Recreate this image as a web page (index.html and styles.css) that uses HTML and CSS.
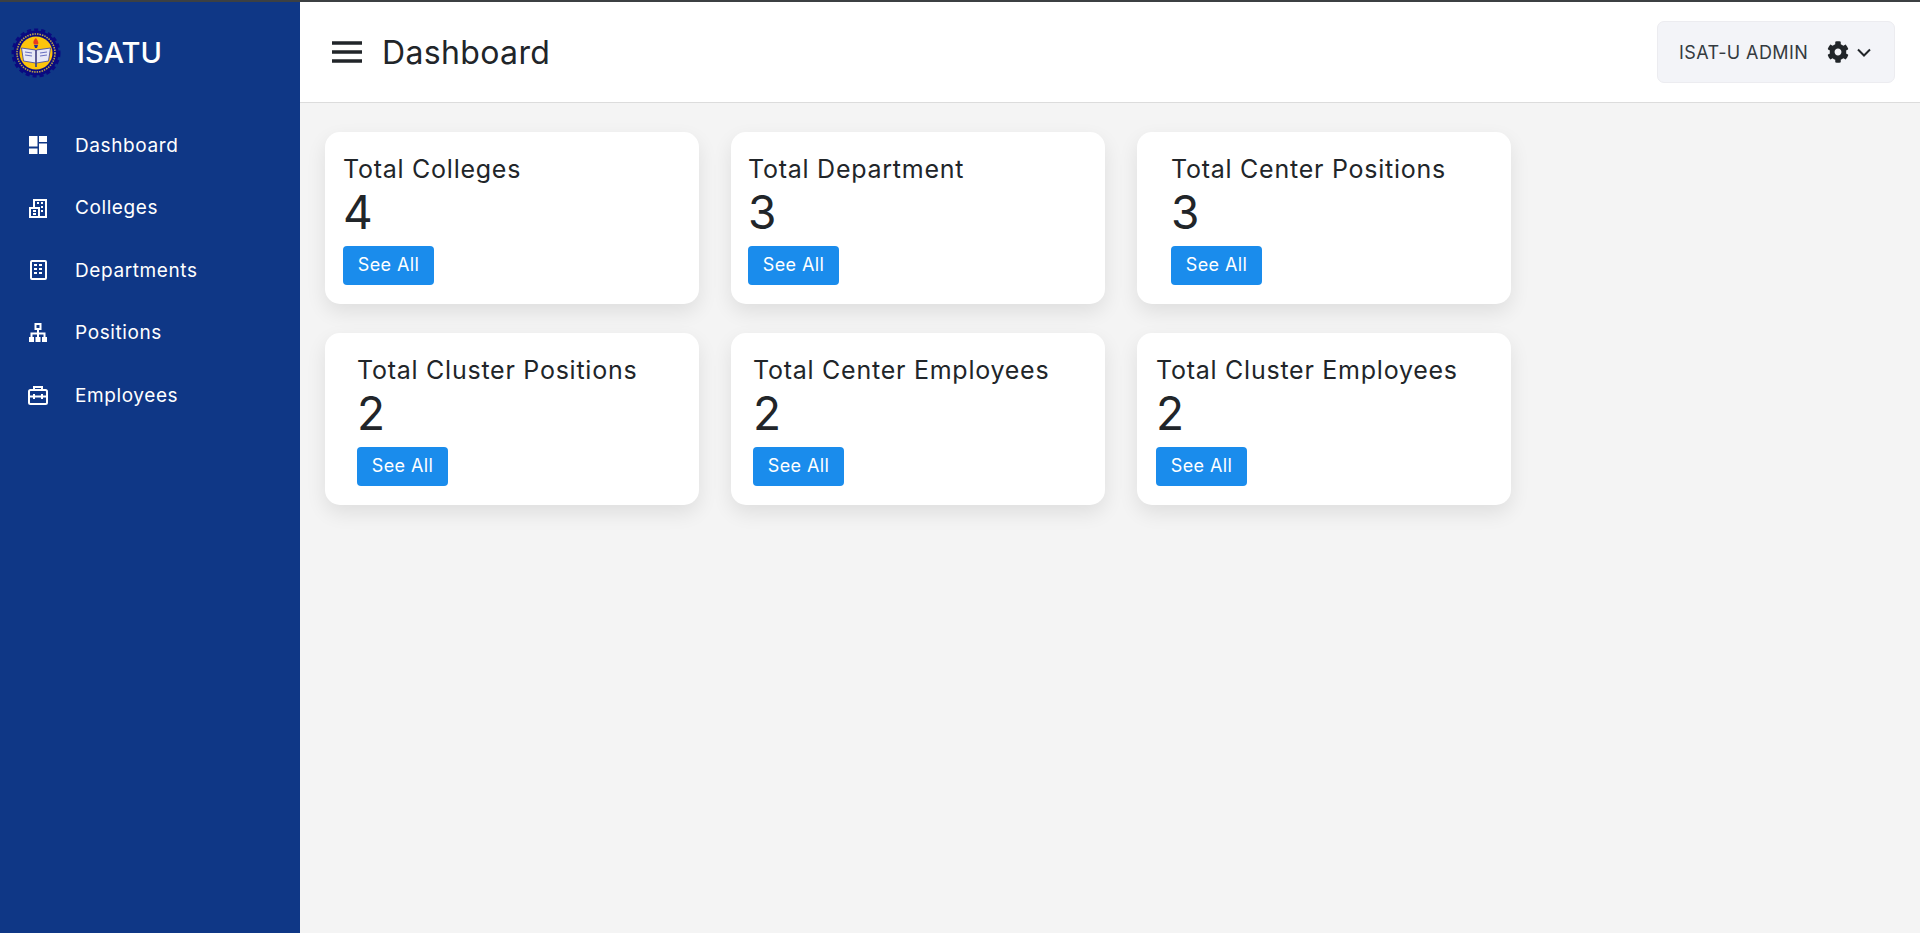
FILE: index.html
```html
<!DOCTYPE html>
<html>
<head>
<meta charset="utf-8" />
<title>ISATU - Dashboard</title>
<link rel="stylesheet" href="styles.css">
</head>
<body>
<div class="top-line"></div>
<div class="app">
	<aside class="sidebar">
		<div class="brand">
			<svg class="seal" viewBox="0 0 50 50">
				<circle cx="25" cy="25" r="22.5" fill="#0a0a80" stroke="#0a0a80" stroke-width="4" stroke-dasharray="4 2.9"/>
				<circle cx="25" cy="25" r="22" fill="#0a0a80"/>
				<circle cx="25" cy="25" r="19" fill="none" stroke="#b9a24a" stroke-width="1.6" stroke-dasharray="1.5 1"/>
				<circle cx="25" cy="25" r="16.5" fill="#fdc40c"/>
				<path d="M23 17 L27 17 L26 20 L24 20 Z" fill="#20309a"/>
				<path d="M25 10 C22 12 22 15 23 16.5 L27 16.5 C28 14.5 27 13 25 10 Z" fill="#e8391c"/>
				<path d="M10.500 20 L24.500 22 L24.500 35 L12.500 33 Z" fill="#e8e8f6" stroke="#3a3f9e" stroke-width=".8"/>
				<path d="M39.500 20 L25.500 22 L25.500 35 L37.500 33 Z" fill="#e8e8f6" stroke="#3a3f9e" stroke-width=".8"/>
				<path d="M14 24 L21 25 M14 27 L21 28 M29 25 L36 24 M29 28 L36 27" stroke="#6a70c0" stroke-width="1.200"/>
				<path d="M25 35 L25 39" stroke="#20309a" stroke-width="1.500"/>
			</svg>
			<span class="brand-name">ISATU</span>
		</div>
		<nav class="menu">
			<a class="menu-item">
				<svg class="menu-icon" viewBox="0 0 24 24" fill="#fff"><path d="M3 3h8.500v10.500H3zM13 3h8v6h-8zM3 15.500h8.500V21H3zM13 10.500h8V21h-8z"/></svg>
				<span>Dashboard</span>
			</a>
			<a class="menu-item">
				<svg class="menu-icon" viewBox="0 0 24 24" fill="none" stroke="#fff" stroke-width="2"><path d="M8 11V4h12v17H4V12h9v9"/><path d="M11 7h2M15 7h2M15 11h2M15 15h2M7 15h3M7 18h3"/></svg>
				<span>Colleges</span>
			</a>
			<a class="menu-item">
				<svg class="menu-icon" viewBox="0 0 24 24" fill="none" stroke="#fff" stroke-width="2"><rect x="5" y="3" width="15" height="18" rx="1"/><path d="M8 7h3M13 7h3M8 11h3M13 11h3M8 15h3M13 15h3"/></svg>
				<span>Departments</span>
			</a>
			<a class="menu-item">
				<svg class="menu-icon" viewBox="0 0 24 24" fill="none" stroke="#fff" stroke-width="2"><rect x="9.500" y="3" width="5" height="5"/><path d="M12 8v8M5.500 16v-3.500h13V16"/><path d="M3 16h5v5H3zM9.500 16h5v5h-5zM16 16h5v5h-5z" fill="#fff" stroke="none"/></svg>
				<span>Positions</span>
			</a>
			<a class="menu-item">
				<svg class="menu-icon" viewBox="0 0 24 24" fill="none" stroke="#fff" stroke-width="2"><path d="M8 7V4h8v3"/><rect x="3" y="7" width="18" height="14" rx="1.500"/><path d="M3 13.500h18M8 11v5M16 11v5"/></svg>
				<span>Employees</span>
			</a>
		</nav>
	</aside>
	<div class="main">
		<header class="topbar">
			<div class="topbar-left">
				<svg class="burger" viewBox="0 0 30 24" fill="none" stroke="#212529" stroke-width="3.500"><path d="M0 3h30M0 12h30M0 21h30"/></svg>
				<h1 class="page-title">Dashboard</h1>
			</div>
			<div class="user-box">
				<span class="user-name">ISAT-U ADMIN</span>
				<svg class="gear" viewBox="0 0 512 512" fill="#212529"><path d="M487.4 315.7l-42.6-24.6c4.3-23.2 4.3-47 0-70.2l42.6-24.6c4.9-2.8 7.1-8.6 5.5-14-11.1-35.6-30-67.8-54.7-94.6-3.8-4.1-10-5.1-14.8-2.3L380.8 110c-17.9-15.4-38.5-27.3-60.8-35.1V25.8c0-5.6-3.9-10.5-9.4-11.7-36.7-8.2-74.3-7.8-109.2 0-5.5 1.2-9.4 6.1-9.4 11.7V75c-22.2 7.9-42.8 19.8-60.8 35.1L88.7 85.500c-4.9-2.8-11-1.9-14.8 2.3-24.7 26.7-43.6 58.9-54.7 94.6-1.7 5.4.6 11.2 5.5 14L67.3 221c-4.3 23.2-4.3 47 0 70.2l-42.6 24.6c-4.9 2.8-7.1 8.6-5.5 14 11.1 35.6 30 67.8 54.7 94.6 3.8 4.1 10 5.1 14.8 2.3l42.6-24.6c17.9 15.4 38.5 27.3 60.8 35.1v49.2c0 5.6 3.9 10.5 9.4 11.7 36.7 8.2 74.3 7.8 109.2 0 5.5-1.2 9.4-6.1 9.4-11.7v-49.2c22.2-7.9 42.8-19.8 60.8-35.1l42.6 24.6c4.9 2.8 11 1.9 14.8-2.3 24.7-26.7 43.6-58.9 54.7-94.6 1.5-5.5-.7-11.3-5.6-14.1zM256 336c-44.1 0-80-35.9-80-80s35.9-80 80-80 80 35.9 80 80-35.9 80-80 80z"/></svg>
				<svg class="chevron" viewBox="0 0 14 9" fill="none" stroke="#212529" stroke-width="2"><path d="M1 1.500l6 6 6-6"/></svg>
			</div>
		</header>
		<section class="cards">
			<div class="card pad-18">
				<h2 class="card-title">Total Colleges</h2>
				<div class="card-num">4</div>
				<a class="btn-see">See All</a>
			</div>
			<div class="card pad-17">
				<h2 class="card-title">Total Department</h2>
				<div class="card-num">3</div>
				<a class="btn-see">See All</a>
			</div>
			<div class="card pad-34">
				<h2 class="card-title">Total Center Positions</h2>
				<div class="card-num">3</div>
				<a class="btn-see">See All</a>
			</div>
			<div class="card pad-32">
				<h2 class="card-title">Total Cluster Positions</h2>
				<div class="card-num">2</div>
				<a class="btn-see">See All</a>
			</div>
			<div class="card pad-22">
				<h2 class="card-title">Total Center Employees</h2>
				<div class="card-num">2</div>
				<a class="btn-see">See All</a>
			</div>
			<div class="card pad-19">
				<h2 class="card-title">Total Cluster Employees</h2>
				<div class="card-num">2</div>
				<a class="btn-see">See All</a>
			</div>
		</section>
	</div>
</div>
</body>
</html>
```

FILE: styles.css
```css
* {
	margin: 0;
	padding: 0;
	box-sizing: border-box;
}
html,body {
	width: 100%;
	height: 100%;
	overflow: hidden;
}
body {
	display: flex;
	flex-direction: column;
	font-family: "Inter", "Liberation Sans", sans-serif;
	color: #212529;
	background: #f4f4f4;
}
.top-line {
	height: 2px;
	background: #3c4043;
	flex: none;
}
.app {
	display: flex;
	flex: 1;
	min-height: 0;
}
.sidebar {
	width: 300px;
	flex: none;
	background: #0f3786;
	color: #fff;
}
.brand {
	height: 100px;
	display: flex;
	align-items: center;
	padding: 1px 0 0 11px;
}
.seal {
	width: 50px;
	height: 50px;
	flex: none;
}
.brand-name {
	margin-left: 16px;
	font-size: 29px;
	font-weight: 500;
}
.menu {
	display: flex;
	flex-direction: column;
	padding-top: 12px;
}
.menu-item {
	height: 62.500px;
	display: flex;
	align-items: center;
	padding-left: 26px;
	font-size: 19px;
	letter-spacing: .6px;
	color: #fff;
}
.menu-icon {
	width: 24px;
	height: 24px;
	margin-right: 25px;
	flex: none;
}
.main {
	flex: 1;
	display: flex;
	flex-direction: column;
	min-width: 0;
}
.topbar {
	height: 101px;
	background: #fff;
	border-bottom: 1px solid #dcdcdc;
	display: flex;
	align-items: center;
	justify-content: space-between;
	padding: 0 25px 0 32px;
	flex: none;
}
.topbar-left {
	display: flex;
	align-items: center;
}
.burger {
	width: 30px;
	height: 24px;
	margin-right: 20px;
}
.page-title {
	font-size: 32px;
	font-weight: 400;
	letter-spacing: .35px;
}
.user-box {
	width: 238px;
	height: 62px;
	background: #f3f4f8;
	border: 1px solid #ececf0;
	border-radius: 7px;
	display: flex;
	align-items: center;
	padding-left: 21px;
}
.user-name {
	font-size: 18px;
	letter-spacing: .4px;
	color: #343a40;
	margin-right: 19px;
}
.gear {
	width: 22px;
	height: 22px;
	margin-right: 8px;
}
.chevron {
	width: 14px;
	height: 9px;
}
.cards {
	display: grid;
	grid-template-columns: repeat(3, 373.500px);
	gap: 29.500px 32.500px;
	padding: 29px 0 0 25px;
}
.card {
	height: 171.500px;
	background: #fff;
	border-radius: 15px;
	box-shadow: 0 8px 20px rgba(0,0,0,.09);
	padding-top: 21px;
}
.pad-17 { padding-left: 17px; }
.pad-18 { padding-left: 18px; }
.pad-19 { padding-left: 19px; }
.pad-22 { padding-left: 22px; }
.pad-32 { padding-left: 32px; }
.pad-34 { padding-left: 34px; }
.card-title {
	font-size: 25px;
	font-weight: 400;
	letter-spacing: .75px;
	line-height: 32px;
}
.card-num {
	font-size: 46px;
	line-height: 54px;
}
.btn-see {
	display: inline-block;
	width: 91px;
	height: 39px;
	margin-top: 7px;
	background: #1a8cec;
	color: #fff;
	border-radius: 4px;
	font-size: 18px;
	letter-spacing: .4px;
	line-height: 38px;
	text-align: center;
}
```
